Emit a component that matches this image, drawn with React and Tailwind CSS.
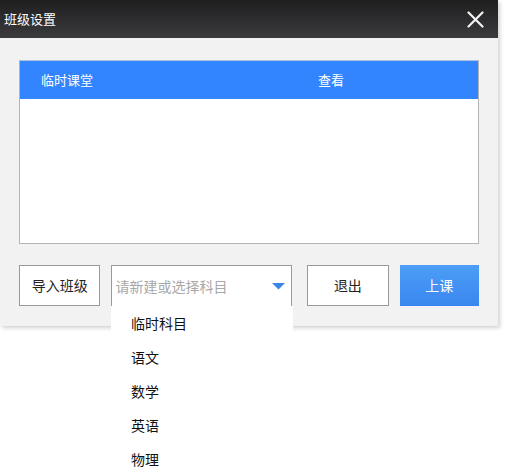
import React, { useState } from "react";

const subjects = ["临时科目", "语文", "数学", "英语", "物理"];

const App = () => {
  const [open] = useState(true);

  return (
    <div
      className="relative w-[506px] h-[470px] overflow-hidden bg-white text-[14px]"
      style={{ fontFamily: '"Microsoft YaHei", "Noto Sans CJK SC", sans-serif' }}
    >
      <div className="w-[498px] shadow-[2px_2px_4px_rgba(0,0,0,0.18)]">
        {/* title bar */}
        <div className="h-[38px] flex items-center justify-between pl-[4px] pr-[14px] bg-gradient-to-b from-[#1f1f20] to-[#3b3b3e]">
          <span className="text-white text-[13px]">班级设置</span>
          <svg width="17" height="17" viewBox="0 0 17 17">
            <path d="M1.5 1.5 L15.5 15.5 M15.5 1.5 L1.5 15.5" stroke="#f2f2f2" strokeWidth="2.2" strokeLinecap="round" />
          </svg>
        </div>

        {/* body */}
        <div className="bg-[#f2f2f2] px-[19px] pt-[22px] pb-[20px]">
          <div className="h-[184px] bg-white border border-[#b4b4b4] border-t-[#a9c2de]">
            <div className="h-[38px] bg-[#3385ff] flex items-center text-white text-[13px]">
              <span className="ml-[21px] w-[277px]">临时课堂</span>
              <span>查看</span>
            </div>
          </div>

          <div className="mt-[21px] flex items-center h-[41px]">
            <button className="w-[82px] h-[41px] bg-white border border-[#9a9a9a] text-[#222] text-[14px]">
              导入班级
            </button>
            <div className="ml-[11px] w-[182px] h-[41px] bg-white border border-[#9a9a9a] border-b-0 flex items-center justify-between pl-[3px] pr-[6px]">
              <span className="text-[#a8a8a8] text-[14px]">请新建或选择科目</span>
              <svg width="13" height="7" viewBox="0 0 13 7">
                <path d="M0 0 H13 L6.5 6.5 Z" fill="#3a86e8" />
              </svg>
            </div>
            <button className="ml-[15px] w-[82px] h-[41px] bg-white border border-[#9a9a9a] text-[#222] text-[14px]">
              退出
            </button>
            <button className="ml-[11px] w-[80px] h-[41px] bg-gradient-to-b from-[#4c9ef6] to-[#3a86f0] text-white text-[14px]">
              上课
            </button>
          </div>
        </div>
      </div>

      {open && (
        <div className="absolute left-[111px] top-[306px] w-[182px] h-[170px] bg-white">
          {subjects.map((s) => (
            <div key={s} className="h-[34px] flex items-center pl-[20px] text-[14px] text-[#111]">
              {s}
            </div>
          ))}
        </div>
      )}
    </div>
  );
};

export default App;
